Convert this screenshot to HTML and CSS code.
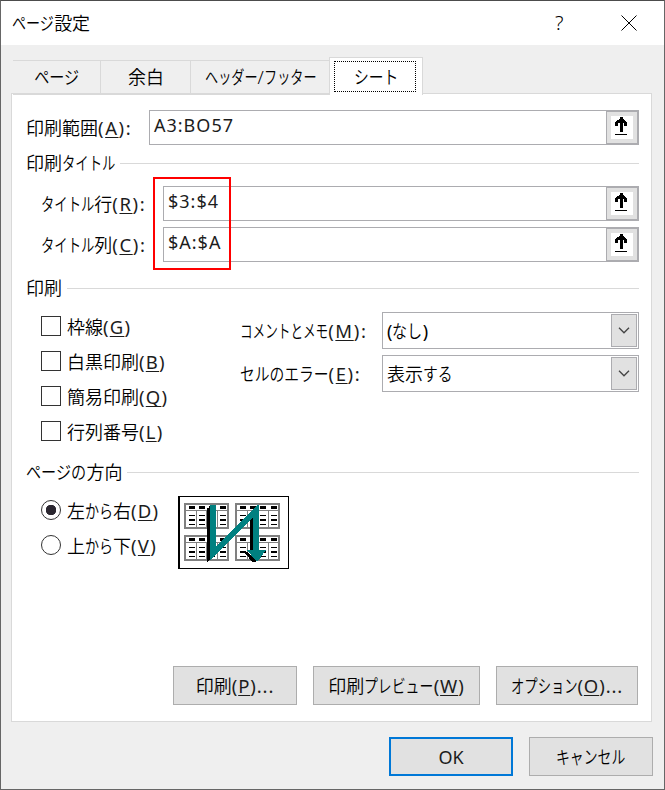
FILE: index.html
```
<!DOCTYPE html>
<html lang="ja">
<head>
<meta charset="utf-8">
<title>ページ設定</title>
<link rel="stylesheet" href="styles.css">
</head>
<body>
<svg width="0" height="0" class="defs">
  <symbol id="pick" viewBox="0 0 22 23">
    <path d="M9 1h3v2h1v1h1v1h1v1h1v4h-3V7h-1v9H9V7H7v3H4V6h1V5h1V4h2V3h1zM4 18h12v1H4z"/>
  </symbol>
  <symbol id="sheet" viewBox="0 0 45 26">
    <path fill="#808080" d="M0 0h45v26H0zM2 2v5h41V2zM2 8v16h10V8zm11 0v16h9V8zm10 0v16h10V8zm11 0v16h9V8z" fill-rule="evenodd"/>
    <path d="M5 3h6v3H5zM15 3h6v3h-6zM25 3h6v3h-6zM36 3h6v3h-6zM5 12h6v1H5zM5 16h6v2H5zM5 21h6v1H5zM15 12h6v1h-6zM15 16h6v2h-6zM15 21h6v1h-6zM25 12h6v1h-6zM25 16h6v2h-6zM25 21h6v1h-6zM36 12h6v1h-6zM36 16h6v2h-6zM36 21h6v1h-6z"/>
  </symbol>
</svg>
<div class="window">
  <header class="titlebar">
    <h1><span class="k n3 w78">ページ</span>設定</h1>
    <span class="help">?</span>
    <svg class="close" width="16" height="16" viewBox="0 0 16 16"><path d="M.5.5l15 15M15.500.5l-15 15"/></svg>
  </header>

  <nav class="tabs">
    <div class="tab tab-page"><span class="k n3 w84">ページ</span></div>
    <div class="tab tab-margin">余白</div>
    <div class="tab tab-header"><span class="k n4 w73">ヘッダー</span>/<span class="k n4 w73">フッター</span></div>
    <div class="tab tab-sheet"><span class="focus"><span class="k n3 w82">シート</span></span></div>
  </nav>

  <main class="panel">
    <div class="field">
      <label class="area">印刷範囲<span class="key">(<u>A</u>):</span></label>
      <div class="input"><span>A3:BO57</span><button class="picker"><svg><use href="#pick"/></svg></button></div>
    </div>

    <h2 class="sec-title"><span>印刷<span class="k n4 w74">タイトル</span></span></h2>
    <div class="titles">
      <div class="field indent">
        <label><span class="k n4 w74">タイトル</span>行<span class="key">(<u>R</u>):</span></label>
        <div class="input"><span>$3:$4</span><button class="picker"><svg><use href="#pick"/></svg></button></div>
      </div>
      <div class="field indent">
        <label><span class="k n4 w74">タイトル</span>列<span class="key">(<u>C</u>):</span></label>
        <div class="input"><span>$A:$A</span><button class="picker"><svg><use href="#pick"/></svg></button></div>
      </div>
      <div class="marker"></div>
    </div>

    <h2 class="sec-print"><span>印刷</span></h2>
    <div class="print">
      <div class="checks">
        <label><i class="box"></i>枠線<span class="key">(<u>G</u>)</span></label>
        <label><i class="box"></i>白黒印刷<span class="key">(<u>B</u>)</span></label>
        <label><i class="box"></i>簡易印刷<span class="key">(<u>Q</u>)</span></label>
        <label><i class="box"></i>行列番号<span class="key">(<u>L</u>)</span></label>
      </div>
      <div class="selects">
        <div class="choice">
          <label><span class="k n7 w70">コメントとメモ</span><span class="key">(<u>M</u>):</span></label>
          <div class="select"><span><span class="paren">(</span><span class="k n2 w84">なし</span><span class="paren">)</span></span><i class="drop"><svg width="12" height="7" viewBox="0 0 12 7"><path d="M1 .8l5 5 5-5"/></svg></i></div>
        </div>
        <div class="choice">
          <label><span class="k n6 w82">セルのエラー</span><span class="key">(<u>E</u>):</span></label>
          <div class="select"><span>表示<span class="k n2 w82">する</span></span><i class="drop"><svg width="12" height="7" viewBox="0 0 12 7"><path d="M1 .8l5 5 5-5"/></svg></i></div>
        </div>
      </div>
    </div>

    <h2 class="sec-order"><span><span class="k n4 w84">ページの</span>方向</span></h2>
    <div class="order">
      <div class="radios">
        <label><i class="radio on"></i>左<span class="k n2 w78">から</span>右<span class="key">(<u>D</u>)</span></label>
        <label><i class="radio"></i>上<span class="k n2 w78">から</span>下<span class="key">(<u>V</u>)</span></label>
      </div>
      <svg class="diagram" width="111" height="73" viewBox="0 0 111 73" shape-rendering="crispEdges">
        <path d="M0 0h111v73H0z"/>
        <path fill="#fff" d="M2 1h108v71H2z"/>
        <use href="#sheet" x="6" y="7" width="45" height="26"/>
        <use href="#sheet" x="57" y="7" width="45" height="26"/>
        <use href="#sheet" x="6" y="39" width="45" height="26"/>
        <use href="#sheet" x="57" y="39" width="45" height="26"/>
        <path d="M29 12h4v50l-3 4h-1zM72 20h4v35h-4zM66 56h3l9 8v2h-4l-3-4z"/>
        <path fill="#008080" d="M32 9h6v41L79 9h2v45h7L80 65h-2L69 54h6V22L32 64z"/>
      </svg>
    </div>

    <div class="actions">
      <button class="btn b-print">印刷<span class="key">(<u>P</u>)...</span></button>
      <button class="btn b-preview">印刷<span class="k n5 w77">プレビュー</span><span class="key">(<u>W</u>)</span></button>
      <button class="btn b-option"><span class="k n5 w74">オプション</span><span class="key">(<u>O</u>)...</span></button>
    </div>
  </main>

  <footer>
    <button class="btn ok">OK</button>
    <button class="btn cancel"><span class="k n5 w77">キャンセル</span></button>
  </footer>
</div>
</body>
</html>
```
FILE: styles.css
```
* { box-sizing: border-box; }
body { margin: 0; background: #efefef; }
body, button { font: 350 18px/24px "Noto Sans", "Noto Sans CJK JP", sans-serif; color: #000; }
h1, h2 { margin: 0; font-size: 18px; font-weight: 350; }
button { padding: 0; margin: 0; }
u { text-decoration-thickness: 1px; text-underline-offset: 2px; text-decoration-skip-ink: none; }
.key { font-size: 18.5px; font-weight: 400; letter-spacing: 1.6px; color: #1c1c1c; }
.checks .key, .radios .key { letter-spacing: 1.2px; }
.btn .key { letter-spacing: .9px; }
.paren { font-weight: 400; }
.defs { position: absolute; }

/* condensed kana: --n characters squeezed to --s of their width */
.k { display: inline-block; white-space: nowrap; width: calc(var(--n) * 1em); transform: scaleX(var(--s)); transform-origin: left; margin-right: calc(var(--n) * (var(--s) - 1) * 1em); }
.n2 { --n: 2; } .n3 { --n: 3; } .n4 { --n: 4; } .n5 { --n: 5; } .n6 { --n: 6; } .n7 { --n: 7; }
.w70 { --s: .7; } .w73 { --s: .73; } .w74 { --s: .74; } .w77 { --s: .77; }
.w78 { --s: .78; } .w82 { --s: .82; } .w84 { --s: .84; }

.window { width: 665px; height: 790px; border: 1px solid #666; border-top-color: #4c4c4c; background: #efefef; white-space: nowrap; overflow: hidden; }
.titlebar { display: flex; align-items: center; height: 44px; padding: 0 27px 0 11px; background: #fff; }
.titlebar h1 { flex: 1; }
.help { width: 10px; margin-right: 56px; font-size: 20px; }
.close { fill: none; stroke: #000; stroke-width: 1; }

.tabs { display: flex; align-items: flex-end; height: 49px; padding-left: 12px; }
.tab { height: 35px; margin-bottom: -1px; padding: 4px 0 0 1px; border: solid #d9d9d9; border-width: 1px 1px 1px 0; text-align: center; }
.tab-page { width: 88px; padding-right: 1px; }
.tab-margin { width: 90px; }
.tab-header { width: 139px; line-height: 24px; }
.tab-sheet { position: relative; width: 94px; height: 38px; margin-left: -1px; padding: 3px 6px 0 4px; border-left-width: 1px; border-bottom: 0; background: #fff; }
.focus { display: block; height: 31px; padding: 3px 0 0 2px; border: 1px dotted #000; }

.panel { width: 641px; height: 629px; margin: -1px 0 0 10px; padding: 16px 12px 0 14px; border: 1px solid #d9d9d9; background: #fff; }
.field { display: flex; height: 35px; }
.field label { width: 123px; padding-top: 6px; }
.indent { padding-left: 15px; margin-bottom: 6px; }
.indent label { width: 122px; }
.input { flex: 1; display: flex; justify-content: space-between; border: 1px solid #acacb0; background: #fff; }
.input > span { padding: 2px 0 0 4px; font-weight: 400; letter-spacing: 1px; color: #1c1c1c; }
.picker { display: flex; align-items: flex-start; width: 33px; height: 35px; margin: -1px; border: solid #acacb0; border-width: 2px 2px 2px 1px; background: #e1e1e1; padding: 4px 0 0 4px; }
.picker svg { display: block; width: 22px; height: 23px; background: #fff; shape-rendering: crispEdges; }
h2 { display: flex; align-items: center; height: 24px; }
h2::after { content: ""; flex: 1; height: 1px; margin-left: 5px; background: #d9d9d9; }
.sec-title { margin: 6px 0 11px; }
.titles { position: relative; }
.marker { position: absolute; left: 127px; top: -9px; width: 78px; height: 93px; border: 2px solid #f00; }
.sec-print { margin-top: 14px; }

.print { display: flex; height: 160px; padding: 12px 0 0 15px; }
.checks { width: 199px; padding-top: 4px; }
.checks label, .radios label { display: flex; height: 35px; align-items: flex-start; line-height: 22px; }
.box, .radio { width: 20px; height: 20px; margin-right: 6px; border: 1px solid #333; background: #fff; }
.radio { border-radius: 50%; }
.on { background: radial-gradient(circle, #2b2730 5px, #fff 5.5px); }
.selects { flex: 1; }
.choice { display: flex; height: 37px; margin-bottom: 6px; }
.choice label { width: 142px; padding-top: 7px; }
.select { flex: 1; display: flex; justify-content: space-between; padding: 1px; border: 1px solid #acacb0; }
.select > span { padding: 5px 0 0 3px; }
.drop { display: flex; justify-content: center; width: 26px; height: 33px; padding-top: 12px; border: 1px solid #acacb0; background: #e1e1e1; }
.drop svg { fill: none; stroke: #444; stroke-width: 1.3; }

.order { display: flex; height: 182px; padding: 12px 0 0 15px; }
.radios { width: 137px; padding-top: 4px; }
.actions { display: flex; gap: 16px; padding-left: 147px; }
.btn { height: 39px; border: 1px solid #adadad; background: #e1e1e1; white-space: nowrap; }
.b-print { width: 124px; }
.b-preview { width: 167px; }
.b-option { width: 142px; }
footer { display: flex; gap: 16px; padding: 15px 0 0 388px; }
.ok { width: 124px; border: 2px solid #0078d7; font-weight: 400; color: #1c1c1c; }
.cancel { width: 124px; }
```
